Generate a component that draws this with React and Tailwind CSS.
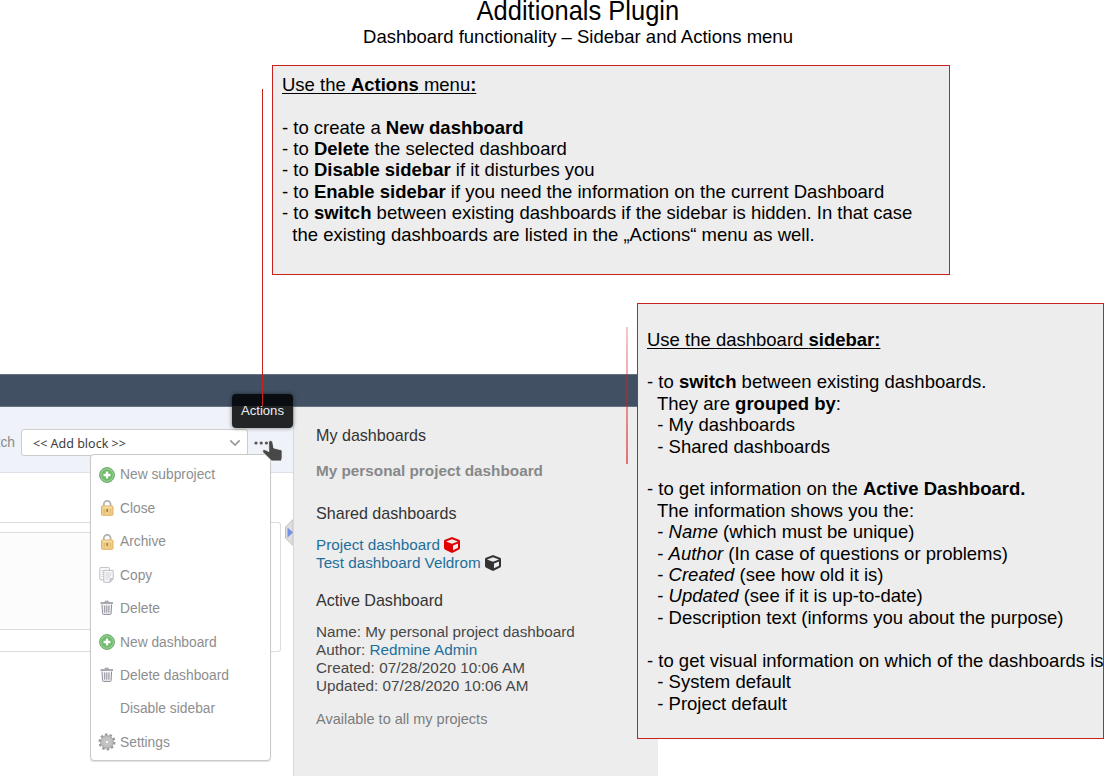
import { FaCube } from "react-icons/fa";

function AddIcon() {
  return (
    <svg className="size-4" viewBox="0 0 16 16">
      <circle cx="8" cy="8" r="7.4" fill="#9ad096" stroke="#5fa55f" strokeWidth="1" />
      <circle cx="8" cy="8" r="5.6" fill="#6cba66" stroke="#82c47e" strokeWidth="0.8" />
      <path d="M8 4.5v7M4.500 8h7" stroke="#fff" strokeWidth="2.3" />
    </svg>
  );
}

function LockIcon() {
  return (
    <svg className="size-4" viewBox="0 0 16 16">
      <path d="M4.8 7V4.2a3.4 3.4 0 0 1 6.8 0V7" fill="none" stroke="#b4b3b0" strokeWidth="1.8" />
      <rect x="2.5" y="6" width="11.5" height="9.3" rx="0.8" fill="#efcf87" stroke="#e2b066" />
      <path d="M3.5 7.2h9.5" stroke="#f8e3ad" />
      <path d="M5.3 9v4.3M11.2 9v4.3" stroke="#e0b265" strokeWidth="0.8" />
      <path d="M8.2 9v3" stroke="#9d7b42" strokeWidth="1.5" />
    </svg>
  );
}

function CopyIcon() {
  return (
    <svg className="size-4" viewBox="0 0 16 16" fill="#fbfbfc" stroke="#bdbdc5">
      <rect x="0.8" y="0.6" width="9.6" height="12.2" rx="0.8" />
      <path d="M2.5 3.5h5M2.5 5.5h2M2.5 7.5h2M2.5 9.5h2" stroke="#d5d5db" />
      <path d="M4.8 3.4h9.4v8.4l-3.2 3.4H4.8z" />
      <path d="M6.5 6h6M6.5 8h6M6.5 10h5M6.5 12h3" stroke="#cfcfd6" />
      <path d="M14.2 11.8H11v3.4z" fill="#d8d8dd" />
    </svg>
  );
}

function TrashIcon() {
  return (
    <svg className="size-4" viewBox="0 0 16 16" fill="none" stroke="#8f8d99">
      <path d="M6.2 2.3V1.2h3v1.1" />
      <path d="M1.5 3h12.500" strokeWidth="1.5" />
      <path d="M3 4.5l.5 9.1q.1.8.9.8h6.8q.8 0 .9-.8l.5-9.1" fill="#f0eff2" strokeWidth="1" />
      <path d="M5.7 5.5v7.2M7.8 5.5v7.2M9.9 5.5v7.2" strokeWidth="1" />
    </svg>
  );
}

function GearIcon() {
  return (
    <svg className="-ml-px size-[18px] shrink-0" viewBox="0 0 18 18">
      <circle cx="9" cy="9" r="7.3" fill="none" stroke="#979797" strokeWidth="2.4" strokeDasharray="2.5 2.087" />
      <circle cx="9" cy="9" r="4.7" fill="none" stroke="#c0c0c0" strokeWidth="4" />
      <circle cx="9" cy="9" r="6.3" fill="none" stroke="#9a9a9a" strokeWidth="0.7" />
      <circle cx="9" cy="9" r="2.200" fill="#f2f2f2" stroke="#8c8c8c" strokeWidth="0.8" />
    </svg>
  );
}

const menuItems = [
  { label: "New subproject", Icon: AddIcon },
  { label: "Close", Icon: LockIcon },
  { label: "Archive", Icon: LockIcon },
  { label: "Copy", Icon: CopyIcon },
  { label: "Delete", Icon: TrashIcon },
  { label: "New dashboard", Icon: AddIcon },
  { label: "Delete dashboard", Icon: TrashIcon },
  { label: "Disable sidebar", Icon: null },
  { label: "Settings", Icon: GearIcon },
];

function ActionsMenu() {
  return (
    <ul className="absolute top-[80px] left-[90px] h-[307px] w-[181px] rounded-[4px] border border-[#c9c9c9] bg-white pt-[3px] shadow-[0_1px_1px_rgba(0,0,0,0.12)]">
      {menuItems.map(({ label, Icon }) => (
        <li key={label} className="flex h-[33.45px] items-center pl-2 text-[13.8px] text-[#8e8e8e]">
          <span className="flex w-[21px] shrink-0 items-center">{Icon && <Icon />}</span>
          <span className="pt-[2px]">{label}</span>
        </li>
      ))}
    </ul>
  );
}

function Toolbar() {
  return (
    <div className="flex h-[66px] border-b border-[#dde2e8] bg-[#eff3f9] pt-[22px]">
      <span className="mt-[5px] flex w-[21px] justify-end pr-[6px] text-[13.8px] leading-[18px] text-[#8b8b8b]">tch</span>
      <div className="flex h-[27px] w-[227px] items-center justify-between rounded-[3px] border border-[#ccc] bg-white pr-[6px] pl-[11px] font-['Noto_Sans',sans-serif] text-[12.5px] text-[#3c3c3c]">
        <span className="pt-[3px]">&lt;&lt; Add block &gt;&gt;</span>
        <svg className="h-[8px] w-[12px]" viewBox="0 0 12 8" fill="none" stroke="#999" strokeWidth="1.7">
          <path d="M1.3 1.3L6 6l4.7-4.7" />
        </svg>
      </div>
      <svg className="mt-[11px] ml-[6px] h-[6px] w-[17px]" viewBox="0 0 17 6" fill="#555">
        <circle cx="2" cy="3" r="1.6" />
        <circle cx="7.2" cy="3" r="1.6" />
        <circle cx="12.4" cy="3" r="1.6" />
      </svg>
    </div>
  );
}

function Sidebar() {
  return (
    <aside className="w-[365px] border-l border-[#d8d8d8] bg-[#ededed] pt-[18px] pl-[22px] text-[15.28px] leading-[18px] text-[#484848]">
      <h3 className="text-[16.1px] leading-5 text-[#333]">My dashboards</h3>
      <p className="mt-[17px] text-[15.3px] font-bold text-[#888]">My personal project dashboard</p>
      <h3 className="mt-[23px] text-[16.1px] leading-5 text-[#333]">Shared dashboards</h3>
      <p className="mt-[13px] flex items-center gap-1 text-[#1d6f9b]">
        Project dashboard <FaCube className="-mt-px size-4 text-[#e00000]" />
      </p>
      <p className="flex items-center gap-1 text-[#1d6f9b]">
        Test dashboard Veldrom <FaCube className="-mt-px size-4 text-[#333]" />
      </p>
      <h3 className="mt-[18px] text-[16.1px] leading-5 text-[#333]">Active Dashboard</h3>
      <p className="mt-[13px]">Name: My personal project dashboard</p>
      <p>
        Author: <span className="text-[#1d6f9b]">Redmine Admin</span>
      </p>
      <p className="tracking-[0.04px]">Created: 07/28/2020 10:06 AM</p>
      <p className="tracking-[0.04px]">Updated: 07/28/2020 10:06 AM</p>
      <p className="mt-[15px] text-[14.5px] text-[#7c7c7c]">Available to all my projects</p>
    </aside>
  );
}

function AppWindow() {
  return (
    <section className="relative w-[658px]">
      <div className="h-[33px] border-y border-[#65727f] bg-[#415063]" />
      <div className="flex h-[369px]">
        <main className="relative w-[293px]">
          <Toolbar />
          <div className="mt-[49px] h-[130px] w-[281px] rounded-r-[3px] border border-l-0 border-[#dcdcdc] pt-[9px]">
            <div className="h-[98px] w-[270px] border-y border-[#dcdcdc] bg-[#fcfcfc]" />
          </div>
          <svg className="absolute top-[112px] right-0 h-[27px] w-[8px]" viewBox="0 0 8 27">
            <path d="M8 .5L.5 8v11L8 26.500z" fill="#dedede" stroke="#bebebe" />
            <path d="M2.500 8.500L8 13.500l-5.500 5z" fill="#7391e6" />
          </svg>
        </main>
        <Sidebar />
      </div>
      <ActionsMenu />
      <div className="absolute top-[20px] left-[232px] flex h-[34px] w-[61px] items-center justify-center rounded-[4px] bg-[linear-gradient(#090c10_0_12px,#232426_12px)] text-[13.1px] text-[#eee] shadow-[0_0_4px_rgba(0,0,0,0.5)]">
        Actions
      </div>
      <svg className="absolute top-[65px] left-[260px] h-[26px] w-[25px]" viewBox="0 0 25 26">
        <path
          d="M8.600 2.500q2-2 4 0l1.200 6.500 7.300 1.800q1 .4 1 1.600v6.200l-.6 3.400H11.600L2.800 13.200q-.8-2 1-2.600 2 0 5 2z"
          fill="#484848"
          stroke="#fff"
          strokeWidth="1"
          strokeOpacity="0.8"
        />
      </svg>
    </section>
  );
}

const noteClass = "absolute border border-[#c9211e] bg-[#ededed] pl-[9px] text-[18.5px] leading-[21.4px] whitespace-pre text-black";

function ActionsNote() {
  return (
    <div className={`${noteClass} top-[65px] left-[272px] h-[210px] w-[678px] pt-[7.8px]`}>
      <p className="underline decoration-1 underline-offset-2">Use the <b>Actions</b> menu<b>:</b></p>
      <br />
      <p>- to create a <b>New dashboard</b></p>
      <p>- to <b>Delete</b> the selected dashboard</p>
      <p>- to <b>Disable sidebar</b> if it disturbes you</p>
      <p className="tracking-[0.01px]">- to <b>Enable sidebar</b> if you need the information on the current Dashboard</p>
      <p>- to <b>switch</b> between existing dashboards if the sidebar is hidden. In that case</p>
      <p>{"  the existing dashboards are listed in the „Actions“ menu as well."}</p>
    </div>
  );
}

function SidebarNote() {
  return (
    <div className={`${noteClass} top-[303px] left-[637px] h-[436px] w-[467px] pt-[24.6px]`}>
      <p className="underline decoration-1 underline-offset-2">Use the dashboard <b>sidebar:</b></p>
      <br />
      <p>- to <b>switch</b> between existing dashboards.</p>
      <p>{"  They are "}<b>grouped by</b>:</p>
      <p>{"  - My dashboards"}</p>
      <p>{"  - Shared dashboards"}</p>
      <br />
      <p>- to get information on the <b>Active Dashboard.</b></p>
      <p>{"  The information shows you the:"}</p>
      <p>{"  - "}<i>Name</i> (which must be unique)</p>
      <p>{"  - "}<i>Author</i> (In case of questions or problems)</p>
      <p>{"  - "}<i>Created</i> (see how old it is)</p>
      <p>{"  - "}<i>Updated</i> (see if it is up-to-date)</p>
      <p>{"  - Description text (informs you about the purpose)"}</p>
      <br />
      <p>- to get visual information on which of the dashboards is</p>
      <p>{"  - System default"}</p>
      <p>{"  - Project default"}</p>
    </div>
  );
}

export default function App() {
  return (
    <div className="relative h-[776px] w-[1105px] overflow-hidden bg-white font-['Liberation_Sans',Arial,sans-serif]">
      <header className="flex h-[374px] w-[1156px] flex-col items-center text-black">
        <h1 className="h-[26px] scale-x-[0.93] text-[27.4px] leading-[22px]">Additionals Plugin</h1>
        <p className="text-[18.5px] leading-[22px]">Dashboard functionality – Sidebar and Actions menu</p>
      </header>
      <AppWindow />
      <ActionsNote />
      <SidebarNote />
      <div className="absolute top-[89px] left-[262px] h-[317px] w-px bg-[#c9211e]" />
      <div className="absolute top-[327px] left-[626px] h-[137px] w-[2px] bg-linear-to-b from-[#d8201e]/25 to-[#d8201e]/60" />
    </div>
  );
}
